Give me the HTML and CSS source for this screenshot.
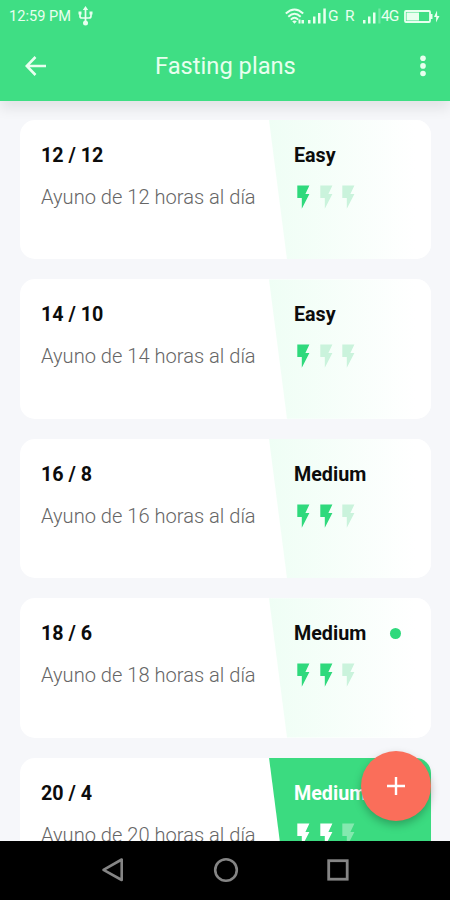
FILE: index.html
```html
<!DOCTYPE html>
<html lang="en">
<head>
    <meta charset="UTF-8">
    <meta name="viewport" content="width=device-width, initial-scale=1.0">
    <title>Fasting plans</title>
    <link rel="stylesheet" href="styles.css">
</head>
<body>
    <svg class="sprite" aria-hidden="true">
        <symbol id="bolt" viewBox="0 0 13 24">
            <path d="M0.3 0.5H12.4L8.4 9H12.4L4.8 23.7V13H0.3Z"/>
        </symbol>
    </svg>

    <div class="screen">
        <header class="header">
            <div class="status-bar">
                <span class="time">12:59 PM</span>
                <svg class="usb" width="15" height="20" viewBox="0 0 15 20">
                    <path d="M7.5 3V16M2 7V10.5Q2 12 4 12H11Q13 12 13 10V7" fill="none" stroke="currentColor" stroke-width="1.7"/>
                    <path d="M7.5 0L10.2 4H4.8ZM0.5 5.5H3.5V8.5H0.5ZM11.5 5.5H14.5V8.5H11.5Z" fill="currentColor"/>
                    <circle cx="7.5" cy="17" r="2.5" fill="currentColor"/>
                </svg>
                <svg class="wifi" width="20" height="16" viewBox="0 0 20 16">
                    <path d="M0.8 5.5Q9.5 -2.5 18.2 5.5M3.3 8.7Q9.5 2.8 15.7 8.7M5.8 11.7Q9.5 8 13.2 11.7" fill="none" stroke="currentColor" stroke-width="1.9"/>
                    <path d="M7.2 13.3L9.5 15.8L11.8 13.3Q9.5 11.6 7.2 13.3ZM13.5 11.5H15.5V15.5H13.5ZM16.5 12H19V15.5H16.5Z" fill="currentColor"/>
                </svg>
                <svg class="signal" width="18" height="16" viewBox="0 0 18 16">
                    <path d="M0 12H2.5V15.5H0ZM5 8.5H7.5V15.5H5ZM10 5H12.5V15.5H10ZM15.3 0.5H17.8V15.5H15.3Z" fill="currentColor"/>
                </svg>
                <span class="network net-g">G</span>
                <span class="network net-r">R</span>
                <svg class="signal" width="18" height="16" viewBox="0 0 18 16">
                    <path d="M0 12H2.5V15.5H0ZM5 8.5H7.5V15.5H5ZM10 4.5H12.5V15.5H10Z" fill="currentColor"/>
                    <path d="M15.3 0.5H17.5V15.5H15.3Z" fill="currentColor" opacity="0.3"/>
                </svg>
                <span class="network net-4g">4G</span>
                <svg class="battery" width="36" height="13" viewBox="0 0 36 13">
                    <rect x="1" y="1" width="25" height="11" rx="1" fill="none" stroke="currentColor" stroke-width="1.8"/>
                    <path d="M2.5 2.5H15V10.5H2.5ZM26 4H28.5V9H26Z" fill="currentColor"/>
                    <path d="M33 0.5L30 7H32.2L32 12.5L35.5 6H33.2Z" fill="currentColor"/>
                </svg>
            </div>
            <div class="toolbar">
                <svg class="back" width="22" height="20" viewBox="0 0 22 20">
                    <path d="M10.5 1L1.7 10L10.5 19M1.7 10H21" fill="none" stroke="currentColor" stroke-width="2.6"/>
                </svg>
                <h1>Fasting plans</h1>
                <svg class="more" width="6" height="22" viewBox="0 0 6 22">
                    <circle cx="3" cy="3.2" r="2.8"/>
                    <circle cx="3" cy="10.9" r="2.8"/>
                    <circle cx="3" cy="18.5" r="2.8"/>
                </svg>
            </div>
        </header>

        <main class="plans">
            <article class="card">
                <div class="info">
                    <h2>12 / 12</h2>
                    <p>Ayuno de 12 horas al día</p>
                </div>
                <div class="level">
                    <h2>Easy</h2>
                    <div class="bolts">
                        <svg><use href="#bolt"/></svg>
                        <svg class="off"><use href="#bolt"/></svg>
                        <svg class="off"><use href="#bolt"/></svg>
                    </div>
                </div>
            </article>
            <article class="card">
                <div class="info">
                    <h2>14 / 10</h2>
                    <p>Ayuno de 14 horas al día</p>
                </div>
                <div class="level">
                    <h2>Easy</h2>
                    <div class="bolts">
                        <svg><use href="#bolt"/></svg>
                        <svg class="off"><use href="#bolt"/></svg>
                        <svg class="off"><use href="#bolt"/></svg>
                    </div>
                </div>
            </article>
            <article class="card">
                <div class="info">
                    <h2>16 / 8</h2>
                    <p>Ayuno de 16 horas al día</p>
                </div>
                <div class="level">
                    <h2>Medium</h2>
                    <div class="bolts">
                        <svg><use href="#bolt"/></svg>
                        <svg><use href="#bolt"/></svg>
                        <svg class="off"><use href="#bolt"/></svg>
                    </div>
                </div>
            </article>
            <article class="card">
                <div class="info">
                    <h2>18 / 6</h2>
                    <p>Ayuno de 18 horas al día</p>
                </div>
                <div class="level">
                    <h2>Medium <span class="dot"></span></h2>
                    <div class="bolts">
                        <svg><use href="#bolt"/></svg>
                        <svg><use href="#bolt"/></svg>
                        <svg class="off"><use href="#bolt"/></svg>
                    </div>
                </div>
            </article>
            <article class="card">
                <div class="info">
                    <h2>20 / 4</h2>
                    <p>Ayuno de 20 horas al día</p>
                </div>
                <div class="level active">
                    <h2>Medium</h2>
                    <div class="bolts">
                        <svg><use href="#bolt"/></svg>
                        <svg><use href="#bolt"/></svg>
                        <svg class="off"><use href="#bolt"/></svg>
                    </div>
                </div>
            </article>
        </main>

        <button class="fab" aria-label="Add plan">
            <svg width="18" height="18" viewBox="0 0 18 18">
                <path d="M9 0V18M0 9H18" stroke="currentColor" stroke-width="2.4"/>
            </svg>
        </button>

        <nav class="nav-bar">
            <svg width="24" height="26" viewBox="0 0 24 26">
                <path d="M20.7 2.5V23L2.5 12.8Z" fill="none" stroke="currentColor" stroke-width="2.6" stroke-linejoin="round"/>
            </svg>
            <svg width="26" height="26" viewBox="0 0 26 26">
                <circle cx="13" cy="13" r="10.8" fill="none" stroke="currentColor" stroke-width="2.6"/>
            </svg>
            <svg width="24" height="24" viewBox="0 0 24 24">
                <rect x="2.7" y="2.7" width="18.5" height="18.5" fill="none" stroke="currentColor" stroke-width="2.8"/>
            </svg>
        </nav>
    </div>
</body>
</html>
```
FILE: styles.css
```css
* {
    margin: 0;
    padding: 0;
    box-sizing: border-box;
    font-family: Roboto, sans-serif;
}

body {
    background-color: #f6f7fa;
}

.sprite {
    display: none;
}

.screen {
    position: relative;
    display: flex;
    flex-direction: column;
    width: 450px;
    height: 900px;
    overflow: hidden;
}

.header {
    position: relative;
    z-index: 1;
    flex: none;
    height: 100.5px;
    background-color: #3fde84;
    color: #e8ffef;
    box-shadow: 0 8px 12px rgba(0, 0, 0, 0.08);
}

.status-bar {
    display: flex;
    align-items: center;
    height: 32px;
    padding: 0 10px 0 9px;
}

.time {
    width: 62px;
    font-size: 14.6px;
    white-space: nowrap;
}

.usb {
    margin-left: 7px;
}

.wifi {
    margin-left: auto;
}

.signal {
    margin-left: 3px;
}

.network {
    font-size: 15.5px;
    line-height: 16px;
}

.net-g {
    width: 12px;
    margin-left: 2px;
}

.net-r {
    width: 10px;
    margin: 0 5px 0 5px;
}

.net-4g {
    width: 19px;
    letter-spacing: -1px;
}

.battery {
    margin-left: 4px;
}

.toolbar {
    display: flex;
    align-items: center;
    height: 68px;
    padding: 0 24px 0 25px;
}

.toolbar h1 {
    margin-left: 108px;
    font-size: 23.7px;
    font-weight: 400;
}

.more {
    margin-left: auto;
    fill: currentColor;
}

.plans {
    flex: 1;
    min-height: 0;
    overflow: hidden;
    padding: 19.5px 19px 0 20px;
}

.card {
    display: flex;
    height: 139.4px;
    margin-bottom: 20px;
    border-radius: 15px;
    background-color: #fff;
    overflow: hidden;
}

.info {
    width: 249px;
    padding: 24px 0 0 21px;
    white-space: nowrap;
}

.card h2 {
    font-size: 19.7px;
    font-weight: 700;
    line-height: 24px;
    color: #0c0c0c;
}

.info p {
    margin-top: 17px;
    font-size: 20.1px;
    font-weight: 300;
    line-height: 24px;
    color: #666;
}

.level {
    flex: 1;
    padding: 24px 0 0 25px;
    background: linear-gradient(90deg, #effef5, #fff 90%);
    clip-path: polygon(0 0, 100% 0, 100% 100%, 18px 100%);
    color: #2fd97c;
}

.card .level h2 {
    display: flex;
    align-items: center;
}

.dot {
    width: 11px;
    height: 11px;
    margin: -1px 0 0 24px;
    border-radius: 50%;
    background-color: #2fd97c;
}

.bolts {
    display: flex;
    gap: 9.5px;
    padding: 17px 0 0 3px;
}

.bolts svg {
    width: 13px;
    height: 24px;
    fill: currentColor;
}

.bolts .off {
    fill: #caf3dc;
}

.level.active {
    background: #3bdb80;
    color: #fff;
}

.card .active h2 {
    color: #fff;
}

.active .off {
    fill: #84e9af;
}

.fab {
    position: absolute;
    top: 751px;
    left: 360.5px;
    z-index: 2;
    display: flex;
    align-items: center;
    justify-content: center;
    width: 70px;
    height: 70px;
    border: none;
    border-radius: 50%;
    background-color: #fa6e5a;
    color: #fff;
    box-shadow: 0 4px 8px rgba(0, 0, 0, 0.25);
}

.nav-bar {
    position: relative;
    z-index: 3;
    flex: none;
    display: flex;
    align-items: center;
    justify-content: space-between;
    height: 59.5px;
    padding: 0 100px 0 101px;
    background-color: #000;
    color: #858585;
}
```
